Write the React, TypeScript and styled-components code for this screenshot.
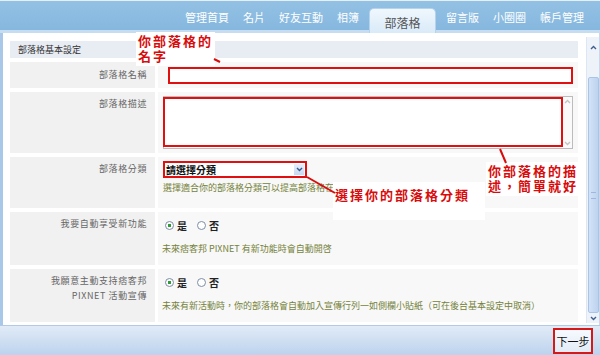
import React from "react"
import styled, { createGlobalStyle } from "styled-components"

const GlobalStyle = createGlobalStyle`
	body {
		margin: 0;
		background: #fff;
		font-family: "Noto Sans CJK TC", "Liberation Sans", sans-serif;
	}
`

const Page = styled.div`
	position: relative;
	width: 600px;
	height: 355px;
	overflow: hidden;
	display: flex;
	flex-direction: column;
	background: #fff;
	font-family: "Noto Sans CJK TC", "Liberation Sans", sans-serif;
`

const NavBar = styled.div`
	height: 33px;
	box-sizing: border-box;
	display: flex;
	align-items: flex-start;
	gap: 14px;
	padding-left: 185px;
	background: linear-gradient(
		to bottom,
		#e4eff9 0,
		#e4eff9 1px,
		#93c1e4 1px,
		#86b7de 30px,
		#c6dcf0 30px,
		#c6dcf0 33px
	);
`

const NavItem = styled.span`
	margin-top: 11px;
	font-size: 11px;
	line-height: 12px;
	color: #fff;
	white-space: nowrap;
`

const ActiveTab = styled.span`
	margin: 8px -4px 0;
	width: 67px;
	height: 25px;
	box-sizing: border-box;
	padding-top: 8px;
	text-align: center;
	font-size: 12px;
	line-height: 12px;
	color: #555;
	border: 1px solid #b5d2ee;
	border-bottom: none;
	border-radius: 5px 5px 0 0;
	background: linear-gradient(to bottom, #f0f7fd, #d9eaf8);
`

const Frame = styled.div`
	height: 292px;
	display: flex;
	border-left: 3px solid #a9c8e8;
	border-right: 1px solid #c7d9ee;
	background: #fff;
`

const Content = styled.div`
	width: 583px;
	box-sizing: border-box;
	padding: 8px 8px 3px 7px;
	display: flex;
	flex-direction: column;
	gap: 4px;
`

const SectionHead = styled.div`
	height: 17px;
	display: flex;
	align-items: center;
	padding-left: 8px;
	background: #e8ecf3;
`

const HeadText = styled.span`
	font-size: 9px;
	line-height: 12px;
	color: #333;
`

const Row = styled.div<{ $h: number }>`
	height: ${(p) => p.$h}px;
	display: grid;
	grid-template-columns: 145px 1fr;
	column-gap: 3px;
`

const Label = styled.div<{ $top?: number }>`
	background: #f1f1f1;
	text-align: right;
	padding: ${(p) => p.$top ?? 4}px 8px 0 0;
	font-size: 9px;
	letter-spacing: 0.6px;
	line-height: 15px;
	color: #666;
`

const Value = styled.div<{ $pad: string }>`
	position: relative;
	background: #f8f8f8;
	padding: ${(p) => p.$pad};
`

const TextInput = styled.div`
	width: 405px;
	height: 17px;
	box-sizing: border-box;
	border: 2px solid #e01010;
	background: #fff;
`

const TextArea = styled.div`
	position: relative;
	width: 410px;
	height: 53px;
	box-sizing: border-box;
	border: 1px solid #bcbcbc;
	background: #fff;
`

const AreaScroll = styled.div`
	position: absolute;
	top: 0;
	right: 0;
	bottom: 0;
	width: 9px;
	display: flex;
	flex-direction: column;
	justify-content: space-between;
	align-items: center;
	padding: 2px 0;
	box-sizing: border-box;
	background: #fafafa;
`

const RedMark = styled.div`
	position: absolute;
	left: -1px;
	top: 0;
	width: 400px;
	height: 50px;
	box-sizing: border-box;
	border: 2px solid #e01010;
`

const Select = styled.div`
	width: 144px;
	height: 17px;
	box-sizing: border-box;
	display: flex;
	align-items: center;
	border: 2px solid #e01010;
	background: #fff;
`

const SelectText = styled.span`
	flex: 1;
	padding-left: 1px;
	font-size: 10px;
	font-weight: 700;
	color: #111;
	line-height: 13px;
`

const SelectArrow = styled.span`
	width: 10px;
	height: 11px;
	margin-right: 1px;
	display: flex;
	align-items: center;
	justify-content: center;
	background: linear-gradient(to bottom, #e6eefb, #c9d9f2);
`

const Hint = styled.div<{ $top: number }>`
	margin-top: ${(p) => p.$top}px;
	font-size: 9px;
	line-height: 12px;
	color: #75823a;
	white-space: nowrap;
`

const RadioGroup = styled.div`
	display: flex;
	align-items: center;
	height: 11px;
	padding-left: 3px;
`

const RadioDot = styled.span<{ $on?: boolean }>`
	width: 9px;
	height: 9px;
	box-sizing: border-box;
	border-radius: 50%;
	border: 1px solid #7d8ea6;
	background: ${(p) =>
		p.$on
			? "radial-gradient(circle, #2f9b36 0 1.6px, #fff 2px)"
			: "#fff"};
	margin-right: 3px;
`

const RadioText = styled.span`
	font-size: 10px;
	font-weight: 700;
	line-height: 11px;
	color: #222;
	margin-right: 10px;
`

const ScrollBar = styled.div`
	width: 13px;
	margin: 4px 0 2px;
	display: flex;
	flex-direction: column;
	align-items: center;
	background: #eef3fa;
	border-left: 1px solid #dde6f2;
`

const ScrollArrow = styled.div<{ $h: number }>`
	height: ${(p) => p.$h}px;
	display: flex;
	align-items: center;
	justify-content: center;
`

const Thumb = styled.div`
	width: 11px;
	height: 236px;
	margin-top: 20px;
	box-sizing: border-box;
	border: 1px solid #aac4e7;
	border-radius: 2px;
	background: linear-gradient(to right, #d3e2f6, #bed3f0);
	display: flex;
	align-items: center;
	justify-content: center;
`

const Grip = styled.div`
	width: 5px;
	height: 5px;
	border-top: 1px solid #9db7de;
	border-bottom: 1px solid #9db7de;
`

const Footer = styled.div`
	flex: 1;
	display: flex;
	justify-content: flex-end;
	align-items: center;
	padding-right: 7px;
	border-top: 1px solid #b3cae6;
	background: linear-gradient(to bottom, #e1ebf7, #cfdff2 50%, #bcd2ee);
`

const NextButton = styled.div`
	width: 40px;
	height: 26px;
	box-sizing: border-box;
	border: 2px solid #d51919;
	background: linear-gradient(to bottom, #f7faff, #e2ebf6);
	display: flex;
	align-items: center;
	justify-content: center;
	font-size: 11px;
	color: #111;
`

const Note = styled.div<{ $x: number; $y: number; $w: number; $h: number; $pt?: number }>`
	position: absolute;
	left: ${(p) => p.$x}px;
	top: ${(p) => p.$y}px;
	width: ${(p) => p.$w}px;
	height: ${(p) => p.$h}px;
	box-sizing: border-box;
	padding: ${(p) => p.$pt ?? 1}px 0 0 2px;
	background: #fff;
	font-size: 13px;
	font-weight: 700;
	letter-spacing: 2px;
	line-height: 15px;
	color: #d80c0c;
	white-space: nowrap;
`

const Lines = styled.svg`
	position: absolute;
	left: 0;
	top: 0;
	pointer-events: none;
`

const Chevron = ({ up, color }: { up?: boolean; color: string }) => (
	<svg width="7" height="5" viewBox="0 0 7 5">
		<polyline
			points={up ? "1,4 3.5,1.5 6,4" : "1,1 3.5,3.5 6,1"}
			fill="none"
			stroke={color}
			strokeWidth="1.4"
		/>
	</svg>
)

const Radios = () => (
	<RadioGroup>
		<RadioDot $on />
		<RadioText>是</RadioText>
		<RadioDot />
		<RadioText>否</RadioText>
	</RadioGroup>
)

export default function App() {
	const tabs = ["管理首頁", "名片", "好友互動", "相簿"]
	const tabsRight = ["留言版", "小圈圈", "帳戶管理"]

	return (
		<Page>
			<GlobalStyle />
			<NavBar>
				{tabs.map((t) => (
					<NavItem key={t}>{t}</NavItem>
				))}
				<ActiveTab>部落格</ActiveTab>
				{tabsRight.map((t) => (
					<NavItem key={t}>{t}</NavItem>
				))}
			</NavBar>

			<Frame>
				<Content>
					<SectionHead>
						<HeadText>部落格基本設定</HeadText>
					</SectionHead>

					<Row $h={26}>
						<Label $top={5}>部落格名稱</Label>
						<Value $pad="5px 5px 0 10px">
							<TextInput />
						</Value>
					</Row>

					<Row $h={61}>
						<Label>部落格描述</Label>
						<Value $pad="4px 5px 0 5px">
							<TextArea>
								<AreaScroll>
									<Chevron up color="#c4c4c4" />
									<Chevron color="#c4c4c4" />
								</AreaScroll>
								<RedMark />
							</TextArea>
						</Value>
					</Row>

					<Row $h={51}>
						<Label>部落格分類</Label>
						<Value $pad="4px 5px 0 5px">
							<Select>
								<SelectText>請選擇分類</SelectText>
								<SelectArrow>
									<Chevron color="#34598f" />
								</SelectArrow>
							</Select>
							<Hint $top={4}>
								選擇適合你的部落格分類可以提高部落格在首頁曝光的機會
							</Hint>
						</Value>
					</Row>

					<Row $h={53}>
						<Label>我要自動享受新功能</Label>
						<Value $pad="8px 5px 0 4px">
							<Radios />
							<Hint $top={12}>
								未來痞客邦 PIXNET 有新功能時會自動開啓
							</Hint>
						</Value>
					</Row>

					<Row $h={53}>
						<Label>
							我願意主動支持痞客邦
							<br />
							PIXNET 活動宣傳
						</Label>
						<Value $pad="8px 5px 0 4px">
							<Radios />
							<Hint $top={12}>
								未來有新活動時，你的部落格會自動加入宣傳行列一如側欄小貼紙（可在後台基本設定中取消）
							</Hint>
						</Value>
					</Row>
				</Content>

				<ScrollBar>
					<ScrollArrow $h={20}>
						<Chevron up color="#3e5f8f" />
					</ScrollArrow>
					<Thumb>
						<Grip />
					</Thumb>
					<ScrollArrow $h={10}>
						<Chevron color="#3e5f8f" />
					</ScrollArrow>
				</ScrollBar>
			</Frame>

			<Footer>
				<NextButton>下一步</NextButton>
			</Footer>

			<Note $x={136} $y={32} $w={79} $h={34}>
				你部落格的
				<br />
				名字
			</Note>
			<Note $x={486} $y={162} $w={93} $h={34}>
				你部落格的描
				<br />
				述，簡單就好
			</Note>
			<Note $x={333} $y={182} $w={152} $h={38} $pt={5}>
				選擇你的部落格分類
			</Note>

			<Lines width="600" height="355">
				<line x1="307" y1="177" x2="335" y2="193" stroke="#d80c0c" strokeWidth="2" />
				<line x1="500" y1="149" x2="506" y2="163" stroke="#d80c0c" strokeWidth="2" />
				<line x1="214" y1="59" x2="220" y2="62" stroke="#d80c0c" strokeWidth="2" />
			</Lines>
		</Page>
	)
}
